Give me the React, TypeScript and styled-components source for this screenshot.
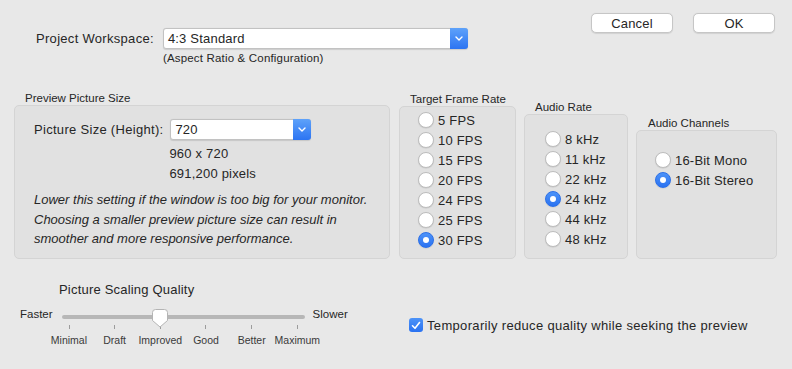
import styled, { createGlobalStyle } from 'styled-components'

const GlobalStyle = createGlobalStyle`
  html, body {
    margin: 0;
    padding: 0;
    background: #e8e8e8;
  }
  body {
    font-family: "Liberation Sans", Arial, sans-serif;
    color: #262626;
  }
`

const Window = styled.div`
  width: 792px;
  height: 369px;
  box-sizing: border-box;
  overflow: hidden;
  display: flex;
  flex-direction: column;
  font-size: 13px;
  background: #e8e8e8;
`

const TopRow = styled.div`
  display: flex;
  justify-content: space-between;
  align-items: flex-start;
  padding: 13px 17px 0 36px;
  height: 52px;
`

const WorkspaceGrid = styled.div`
  margin-top: 15px;
  display: grid;
  grid-template-columns: auto auto;
  column-gap: 9px;
  align-items: center;
`

const Label = styled.span`
  font-size: 13px;
  line-height: 16px;
  letter-spacing: 0.3px;
  white-space: nowrap;
`

const Caption = styled.span`
  grid-column: 2;
  margin-top: 3px;
  font-size: 11.5px;
  line-height: 13px;
  letter-spacing: 0.18px;
`

const PopupField = styled.div<{ $width: number }>`
  width: ${p => p.$width}px;
  height: 21px;
  box-sizing: border-box;
  display: flex;
  align-items: stretch;
  background: #fff;
  border: 1px solid #c2c2c2;
  border-radius: 3px;
  box-shadow: 0 0.5px 1px rgba(0, 0, 0, 0.12);
`

const PopupValue = styled.span`
  flex: 1;
  padding-left: 4px;
  font-size: 13px;
  line-height: 19px;
  letter-spacing: 0.2px;
`

const PopupArrow = styled.span`
  width: 18px;
  margin: -1px -1px -1px 0;
  display: flex;
  align-items: center;
  justify-content: center;
  background: linear-gradient(#5ea2fa, #2c74f2);
  border-radius: 0 3px 3px 0;
`

const ButtonBar = styled.div`
  display: flex;
  gap: 20px;
`

const PushButton = styled.button`
  width: 82px;
  height: 20px;
  padding: 0;
  background: #fff;
  border: 1px solid #c6c6c6;
  border-radius: 5px;
  box-shadow: 0 0.5px 1px rgba(0, 0, 0, 0.1);
  font-family: "Liberation Sans", Arial, sans-serif;
  font-size: 13px;
  color: #262626;
  letter-spacing: 0.2px;
`

const GroupsRow = styled.div`
  display: flex;
  align-items: flex-end;
  margin-top: 26px;
  padding-left: 14px;
`

const GroupColumn = styled.div<{ $gapLeft: number }>`
  display: flex;
  flex-direction: column;
  margin-left: ${p => p.$gapLeft}px;
`

const GroupTitle = styled.div<{ $indent?: number }>`
  font-size: 11.5px;
  line-height: 14px;
  padding-left: ${p => p.$indent ?? 11}px;
  white-space: nowrap;
`

const GroupBox = styled.div<{ $w: number; $h: number; $pt: number; $pl: number }>`
  width: ${p => p.$w}px;
  height: ${p => p.$h}px;
  box-sizing: border-box;
  padding: ${p => p.$pt}px 0 0 ${p => p.$pl}px;
  background: #e1e1e1;
  border: 1px solid #d4d4d4;
  border-radius: 5px;
`

const SizeGrid = styled.div`
  display: grid;
  grid-template-columns: auto 1fr;
  column-gap: 7px;
  align-items: center;
`

const InfoLines = styled.div`
  grid-column: 2;
  margin-top: 4px;
  margin-left: -1px;
  font-size: 13px;
  line-height: 20px;
  letter-spacing: 0.2px;
`

const Note = styled.p`
  grid-column: 1 / -1;
  margin: 6px 0 0;
  font-size: 13px;
  font-style: italic;
  line-height: 19.5px;
`

const RadioList = styled.div`
  display: flex;
  flex-direction: column;
`

const RadioRow = styled.label`
  display: flex;
  align-items: center;
  gap: 4px;
  height: 20px;
  font-size: 13px;
  letter-spacing: 0.2px;
  white-space: nowrap;
`

const RadioDot = styled.span<{ $checked?: boolean }>`
  width: 16px;
  height: 16px;
  box-sizing: border-box;
  border-radius: 50%;
  display: flex;
  align-items: center;
  justify-content: center;
  background: ${p => (p.$checked ? 'linear-gradient(#4d93f8, #2a72f1)' : '#fff')};
  border: 1px solid ${p => (p.$checked ? '#2a6fe8' : '#bdbdbd')};
  box-shadow: 0 0.5px 1px rgba(0, 0, 0, 0.12);

  &::after {
    content: '';
    display: ${p => (p.$checked ? 'block' : 'none')};
    width: 6px;
    height: 6px;
    border-radius: 50%;
    background: #fff;
  }
`

const BottomRow = styled.div`
  display: flex;
  align-items: flex-start;
  margin-top: 23px;
  padding-left: 20px;
`

const SliderBlock = styled.div`
  display: flex;
  flex-direction: column;
  width: 360px;
`

const SliderTitle = styled.div`
  padding-left: 39px;
  font-size: 13px;
  line-height: 16px;
  letter-spacing: 0.2px;
  margin-bottom: 9px;
`

const SliderRow = styled.div`
  display: flex;
  align-items: flex-start;
`

const EndLabel = styled.span<{ $gap: number; $side: 'left' | 'right' }>`
  font-size: 11.5px;
  line-height: 14px;
  ${p => (p.$side === 'left' ? `margin-right: ${p.$gap}px;` : `margin-left: ${p.$gap}px;`)}
`

const TrackColumn = styled.div`
  position: relative;
  width: 243px;
  display: flex;
  flex-direction: column;
`

const Track = styled.div`
  margin-top: 8px;
  height: 4px;
  border-radius: 2px;
  background: #b7b7b7;
`

const Thumb = styled.svg`
  position: absolute;
  left: 90px;
  top: 2px;
`

const TickRow = styled.div`
  display: flex;
  justify-content: space-between;
  padding: 0 7px;
  margin-top: 6px;
`

const Tick = styled.span`
  width: 1px;
  height: 4px;
  background: #9c9c9c;
`

const TickLabels = styled.div`
  display: grid;
  grid-template-columns: repeat(6, 45.7px);
  margin-left: -15.5px;
  margin-top: 5px;
`

const TickLabel = styled.span`
  text-align: center;
  font-size: 10.5px;
  line-height: 13px;
  color: #3a3a3a;
  white-space: nowrap;
`

const CheckRow = styled.label`
  display: flex;
  align-items: center;
  gap: 4px;
  margin-left: 29px;
  margin-top: 35px;
  height: 16px;
  font-size: 13px;
  letter-spacing: 0.33px;
  white-space: nowrap;
`

const CheckBox = styled.span`
  width: 14px;
  height: 14px;
  border-radius: 3px;
  background: linear-gradient(#4d93f8, #2a72f1);
  display: flex;
  align-items: center;
  justify-content: center;
`

const Chevron = () => (
  <svg width="8" height="5" viewBox="0 0 8 5">
    <polyline points="1,1 4,4 7,1" fill="none" stroke="#fff" strokeWidth="1.4" strokeLinecap="round" strokeLinejoin="round" />
  </svg>
)

const Popup = (props: { value: string; width: number }) => (
  <PopupField $width={props.width}>
    <PopupValue>{props.value}</PopupValue>
    <PopupArrow>
      <Chevron />
    </PopupArrow>
  </PopupField>
)

const Radio = (props: { label: string; checked?: boolean }) => (
  <RadioRow>
    <RadioDot $checked={props.checked} />
    {props.label}
  </RadioRow>
)

const frameRates = ['5 FPS', '10 FPS', '15 FPS', '20 FPS', '24 FPS', '25 FPS', '30 FPS']
const audioRates = ['8 kHz', '11 kHz', '22 kHz', '24 kHz', '44 kHz', '48 kHz']
const qualities = ['Minimal', 'Draft', 'Improved', 'Good', 'Better', 'Maximum']

const App = () => {
  return (
    <Window>
      <GlobalStyle />
      <TopRow>
        <WorkspaceGrid>
          <Label>Project Workspace:</Label>
          <Popup value="4:3 Standard" width={305} />
          <Caption>(Aspect Ratio &amp; Configuration)</Caption>
        </WorkspaceGrid>
        <ButtonBar>
          <PushButton>Cancel</PushButton>
          <PushButton>OK</PushButton>
        </ButtonBar>
      </TopRow>

      <GroupsRow>
        <GroupColumn $gapLeft={0}>
          <GroupTitle>Preview Picture Size</GroupTitle>
          <GroupBox $w={376} $h={154} $pt={13} $pl={19}>
            <SizeGrid>
              <Label>Picture Size (Height):</Label>
              <Popup value="720" width={141} />
              <InfoLines>
                960 x 720
                <br />
                691,200 pixels
              </InfoLines>
              <Note>
                Lower this setting if the window is too big for your monitor.
                <br />
                Choosing a smaller preview picture size can result in
                <br />
                smoother and more responsive performance.
              </Note>
            </SizeGrid>
          </GroupBox>
        </GroupColumn>

        <GroupColumn $gapLeft={9}>
          <GroupTitle>Target Frame Rate</GroupTitle>
          <GroupBox $w={117} $h={153} $pt={3} $pl={18}>
            <RadioList>
              {frameRates.map(r => (
                <Radio key={r} label={r} checked={r === '30 FPS'} />
              ))}
            </RadioList>
          </GroupBox>
        </GroupColumn>

        <GroupColumn $gapLeft={8}>
          <GroupTitle>Audio Rate</GroupTitle>
          <GroupBox $w={104} $h={145} $pt={14} $pl={20}>
            <RadioList>
              {audioRates.map(r => (
                <Radio key={r} label={r} checked={r === '24 kHz'} />
              ))}
            </RadioList>
          </GroupBox>
        </GroupColumn>

        <GroupColumn $gapLeft={8}>
          <GroupTitle $indent={12}>Audio Channels</GroupTitle>
          <GroupBox $w={141} $h={129} $pt={19} $pl={18}>
            <RadioList>
              <Radio label="16-Bit Mono" />
              <Radio label="16-Bit Stereo" checked />
            </RadioList>
          </GroupBox>
        </GroupColumn>
      </GroupsRow>

      <BottomRow>
        <SliderBlock>
          <SliderTitle>Picture Scaling Quality</SliderTitle>
          <SliderRow>
            <EndLabel $side="left" $gap={9}>Faster</EndLabel>
            <TrackColumn>
              <Track />
              <Thumb width="16" height="19" viewBox="0 0 16 19">
                <path
                  d="M3.5 0.5 H12.5 A3 3 0 0 1 15.5 3.5 V11.5 L8 18 L0.5 11.5 V3.5 A3 3 0 0 1 3.5 0.5 Z"
                  fill="#fff"
                  stroke="#b4b4b4"
                  strokeWidth="1"
                />
              </Thumb>
              <TickRow>
                {qualities.map(q => (
                  <Tick key={q} />
                ))}
              </TickRow>
              <TickLabels>
                {qualities.map(q => (
                  <TickLabel key={q}>{q}</TickLabel>
                ))}
              </TickLabels>
            </TrackColumn>
            <EndLabel $side="right" $gap={8}>Slower</EndLabel>
          </SliderRow>
        </SliderBlock>
        <CheckRow>
          <CheckBox>
            <svg width="10" height="9" viewBox="0 0 10 9">
              <polyline points="1.5,4.8 4,7.3 8.5,1.5" fill="none" stroke="#fff" strokeWidth="1.6" strokeLinecap="round" strokeLinejoin="round" />
            </svg>
          </CheckBox>
          Temporarily reduce quality while seeking the preview
        </CheckRow>
      </BottomRow>
    </Window>
  )
}

export default App
